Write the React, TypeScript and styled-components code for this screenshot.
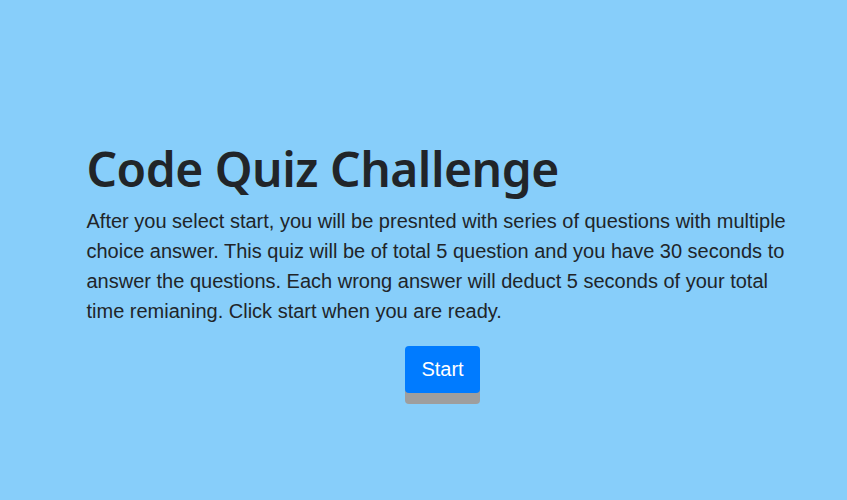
import React from 'react';
import styled, { createGlobalStyle } from 'styled-components';

const GlobalStyle = createGlobalStyle`
    html, body {
        margin: 0;
        padding: 0;
        background-color: #87cefa;
    }
    body {
        font-family: "Liberation Sans", Arial, sans-serif;
        color: #212529;
    }
`;

const Page = styled.main`
    min-height: 500px;
    display: flex;
    justify-content: center;
    padding: 140px 0 0 0;
    box-sizing: border-box;
`;

const Jumbotron = styled.section`
    width: 712px;
    margin-left: 38px;
    display: flex;
    flex-direction: column;
`;

const Title = styled.h1`
    margin: 0 0 8px;
    font-family: "Noto Sans", "Open Sans", sans-serif;
    font-size: 48px;
    font-weight: 600;
    line-height: 1.2;
    letter-spacing: -0.5px;
    color: #212529;
`;

const Lead = styled.p`
    margin: 0 0 20px;
    font-size: 20px;
    line-height: 30px;
`;

const StartButton = styled.button`
    align-self: center;
    padding: 10px 16px;
    border: none;
    border-radius: 4px;
    background-color: #007bff;
    color: #fff;
    font-family: "Liberation Sans", Arial, sans-serif;
    font-size: 20px;
    line-height: 27px;
    cursor: pointer;
    box-shadow: 0 11px 0 #9e9e9e;
`;

const App: React.FC = () => {
    return (
        <>
            <GlobalStyle />
            <Page>
                <Jumbotron>
                    <Title>Code Quiz Challenge</Title>
                    <Lead>
                        After you select start, you will be presnted with series of questions with multiple
                        choice answer. This quiz will be of total 5 question and you have 30 seconds to
                        answer the questions. Each wrong answer will deduct 5 seconds of your total
                        time remianing. Click start when you are ready.
                    </Lead>
                    <StartButton>Start</StartButton>
                </Jumbotron>
            </Page>
        </>
    );
};

export default App;
